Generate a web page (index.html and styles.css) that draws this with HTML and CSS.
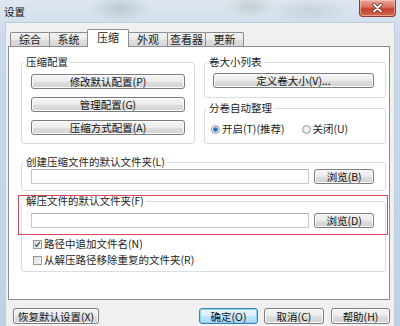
FILE: index.html
```html
<!DOCTYPE html>
<html lang="zh-CN">
<head>
  <meta charset="UTF-8">
  <title>设置</title>
  <link rel="stylesheet" href="styles.css">
</head>
<body>
  <div class="window">
    <div class="titlebar">
      <span class="title">设置</span>
      <span class="close">
        <svg width="11" height="10" viewBox="0 0 11 10">
          <path d="M2 1.5 L9 8.5 M9 1.5 L2 8.5" stroke="#6b2a22" stroke-width="3.4" stroke-linecap="round"/>
          <path d="M2 1.5 L9 8.5 M9 1.5 L2 8.5" stroke="#fff" stroke-width="1.8" stroke-linecap="round"/>
        </svg>
      </span>
    </div>

    <div class="client">
      <div class="tabs">
        <span class="tab t1">综合</span>
        <span class="tab t2">系统</span>
        <span class="tab t3 active">压缩</span>
        <span class="tab t4">外观</span>
        <span class="tab t5">查看器</span>
        <span class="tab t6">更新</span>
      </div>

      <div class="panel">
        <div class="top">
          <div class="group profiles">
            <div class="group-title">压缩配置</div>
            <button class="btn">修改默认配置(P)</button>
            <button class="btn">管理配置(G)</button>
            <button class="btn">压缩方式配置(A)</button>
          </div>
          <div class="col">
            <div class="group volumes">
              <div class="group-title">卷大小列表</div>
              <button class="btn">定义卷大小(V)...</button>
            </div>
            <div class="group autosort">
              <div class="group-title">分卷自动整理</div>
              <div class="radios">
                <span class="radio"><span class="dot on"></span>开启(T)(推荐)</span>
                <span class="radio"><span class="dot"></span>关闭(U)</span>
              </div>
            </div>
          </div>
        </div>

        <div class="group folder">
          <div class="group-title">创建压缩文件的默认文件夹(L)</div>
          <div class="path-row">
            <span class="field"></span>
            <button class="btn browse">浏览(B)</button>
          </div>
        </div>

        <div class="group folder extract">
          <div class="group-title">解压文件的默认文件夹(F)</div>
          <span class="highlight"></span>
          <div class="path-row">
            <span class="field"></span>
            <button class="btn browse">浏览(D)</button>
          </div>
          <div class="checks">
            <span class="check"><span class="box on">
              <svg width="9" height="9" viewBox="0 0 9 9"><path d="M1.5 4.5 L3.5 7 L7.5 1.5" fill="none" stroke="#3a4a5e" stroke-width="1.5"/></svg>
            </span>路径中追加文件名(N)</span>
            <span class="check"><span class="box"></span>从解压路径移除重复的文件夹(R)</span>
          </div>
        </div>
      </div>

      <div class="footer">
        <button class="btn reset">恢复默认设置(X)</button>
        <div class="actions">
          <button class="btn default ok">确定(O)</button>
          <button class="btn cancel">取消(C)</button>
          <button class="btn help">帮助(H)</button>
        </div>
      </div>
    </div>
  </div>
</body>
</html>
```

FILE: styles.css
```css
* {
  box-sizing: border-box;
}
body {
  margin: 0;
  font-family: "Noto Sans CJK SC", "Noto Sans", sans-serif;
  font-size: 10.5px;
  color: #1c1c1c;
}
.window {
  width: 400px;
  height: 326px;
  overflow: hidden;
  display: flex;
  flex-direction: column;
  background:
    radial-gradient(ellipse 30px 14px at 120px 8px, rgba(150, 165, 175, 0.45), transparent),
    radial-gradient(ellipse 26px 12px at 250px 6px, rgba(160, 175, 160, 0.4), transparent),
    radial-gradient(ellipse 40px 14px at 310px 10px, rgba(175, 185, 200, 0.4), transparent),
    linear-gradient(to bottom, #dfe7f0, #c9d9ea 40px, #bfd2e7);
}

/* title bar */
.titlebar {
  height: 22px;
  flex: none;
  display: flex;
  justify-content: space-between;
  align-items: flex-start;
  padding: 0 4px;
}
.title {
  line-height: 24px;
  color: #111;
}
.close {
  width: 37px;
  height: 17px;
  display: flex;
  align-items: center;
  justify-content: center;
  border: 1px solid #8a3a2e;
  border-top: none;
  border-radius: 0 0 4px 4px;
  background: linear-gradient(to bottom, #eba89b, #d9715e 45%, #c3412b 55%, #d7654c);
  box-shadow: inset 0 0 0 1px rgba(255, 220, 210, 0.5);
}

/* client area */
.client {
  flex: 1;
  margin: 0 5px;
  padding: 6px 4px 0 2px;
  background: #f0f0f0;
  border-top: 1px solid #c3cdd8;
  border-left: 1px solid #c3cdd8;
  border-right: 1px solid #c3cdd8;
}
.tabs {
  height: 17px;
  display: flex;
  align-items: flex-end;
  padding-left: 2px;
  position: relative;
  z-index: 1;
}
.tab {
  height: 14px;
  margin-right: -1px;
  border: 1px solid #898c95;
  border-bottom: none;
  border-radius: 2px 2px 0 0;
  background: linear-gradient(to bottom, #f4f4f4, #e8e8e8 50%, #dcdcdc 51%, #d8d8d8);
  font-size: 11px;
  line-height: 13px;
  text-align: center;
}
.tab.active {
  height: 18px;
  margin-bottom: -1px;
  background: #fff;
  line-height: 15px;
}
.t1 { width: 40px; }
.t2 { width: 39px; }
.t3 { width: 42px; }
.t4 { width: 40px; }
.t5 { width: 39px; }
.t6 { width: 39px; }

.panel {
  height: 254px;
  border: 1px solid #898c95;
  background: #fff;
  padding: 15px 3px 0 12px;
}
.top {
  display: grid;
  grid-template-columns: 174px 1fr;
  gap: 9px;
}

/* group boxes */
.group {
  border: 1px solid #d5dfe5;
  border-radius: 3px;
}
.group-title {
  width: fit-content;
  margin: -7px 0 0 -7px;
  padding: 0 2px;
  line-height: 12px;
  background: #fff;
}
.profiles {
  display: flex;
  flex-direction: column;
  gap: 8px;
  padding: 0 9px 8px;
}
.profiles .group-title {
  margin-bottom: -2px;
}
.volumes {
  padding: 0 11px 9px 8px;
}
.volumes .group-title {
  margin-left: -6px;
}
.volumes .btn {
  width: 100%;
  margin-top: 5px;
}
.autosort {
  margin-top: 10px;
  padding: 0 6px 8px;
}
.autosort .group-title {
  margin-left: -4px;
}
.radios {
  display: flex;
  gap: 17px;
  margin-top: 9px;
  line-height: 12px;
}
.radio {
  display: flex;
  align-items: center;
  gap: 2px;
}
.dot {
  width: 9px;
  height: 9px;
  border-radius: 50%;
  border: 1px solid #9a9a9a;
  background: radial-gradient(circle, #f6f6f6, #dcdcdc);
}
.dot.on {
  background: radial-gradient(circle, #1f5fb3 0, #3b7fd0 2px, #e8eef5 2.6px, #d8dde3);
}

.folder {
  margin-top: 18px;
  padding: 0 11px 6px 9px;
}
.extract {
  position: relative;
  margin-top: 10px;
  padding-bottom: 5px;
}
.path-row {
  display: flex;
  gap: 5px;
  margin-top: 1px;
}
.extract .path-row {
  margin-top: 6px;
}
.field {
  width: 280px;
  height: 15px;
  border: 1px solid #c3c8d0;
  border-top-color: #a7afba;
  background: #fff;
}
.browse {
  width: 60px;
}
.highlight {
  position: absolute;
  top: -7px;
  left: -4px;
  right: -3px;
  height: 40px;
  border: 1.5px solid #d8465c;
}
.checks {
  display: flex;
  flex-direction: column;
  gap: 4px;
  margin-top: 10px;
  padding-left: 2px;
  line-height: 12px;
}
.check {
  display: flex;
  align-items: center;
  gap: 2px;
}
.box {
  width: 9px;
  height: 9px;
  border: 1px solid #9a9a9a;
  background: linear-gradient(to bottom right, #dcdcdc, #f8f8f8);
  display: flex;
  align-items: center;
  justify-content: center;
}
.box svg {
  display: block;
}

/* buttons */
.btn {
  height: 15px;
  padding: 0;
  font: inherit;
  line-height: 13px;
  color: #111;
  border: 1px solid #7c7c7c;
  border-radius: 3px;
  background: linear-gradient(to bottom, #f4f4f4, #ececec 50%, #dedede 51%, #d2d2d2);
  box-shadow: inset 0 0 0 1px #fbfbfb;
  text-align: center;
}
.btn.default {
  border-color: #3c7fb1;
  background: linear-gradient(to bottom, #eaf6fd, #d9f0fc 50%, #bee6fd 51%, #a7d9f5);
  box-shadow: inset 0 0 0 1px #8ed4f0;
}

.footer {
  display: flex;
  justify-content: space-between;
  padding: 8px 0 0 5px;
}
.footer .btn {
  height: 16px;
}
.reset {
  width: 86px;
}
.actions {
  display: flex;
  gap: 6px;
}
.ok { width: 59px; }
.cancel { width: 60px; margin-right: 1px; }
.help { width: 59px; }
```
